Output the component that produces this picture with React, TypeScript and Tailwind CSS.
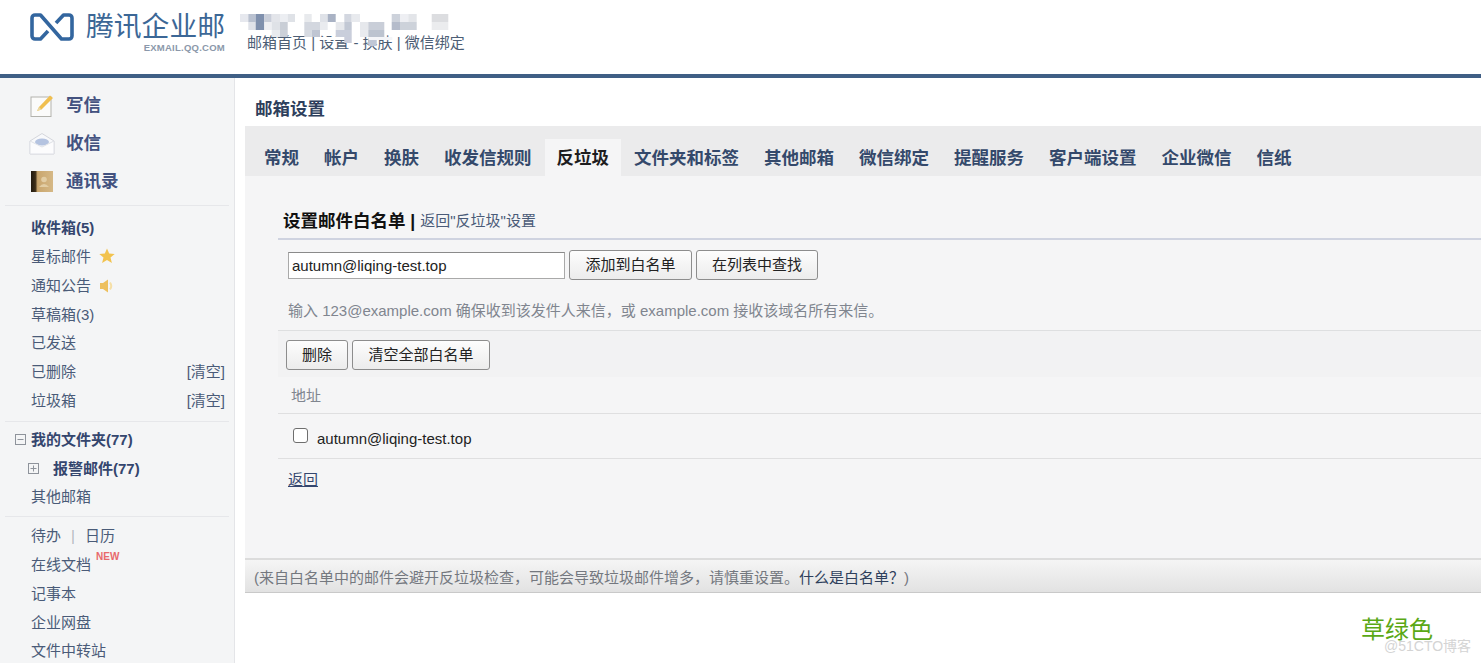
import React from 'react'

const FONT = '"Liberation Sans", "Noto Sans CJK SC", sans-serif'

const tabs = ['常规', '帐户', '换肤', '收发信规则', '反垃圾', '文件夹和标签', '其他邮箱', '微信绑定', '提醒服务', '客户端设置', '企业微信', '信纸']

// pixelated redaction over the account name, values read off the screenshot
const mosaic: [number, number, number, number, string][] = [
  [240, 14, 8.300, 8, '#e6e8ee'], [248.300, 14, 7.400, 8, '#b9c1d0'], [255.700, 14, 8.600, 8, '#7f90ad'], [264.300, 14, 7.400, 8, '#c9ced9'],
  [271.700, 14, 8.300, 8, '#e3e5ea'], [280, 14, 7.700, 8, '#eceef2'], [287.700, 14, 7.300, 8, '#dfe2e7'], [304.300, 14, 7.400, 8, '#e8eaed'],
  [320, 14, 7.700, 8, '#dfe2e8'], [327.700, 14, 8, 8, '#a9b2c4'], [344.300, 14, 7.400, 8, '#d3d7e0'], [351.700, 14, 8.300, 8, '#e8eaee'],
  [391.700, 14, 8.300, 8, '#cdd2db'], [400, 14, 8.300, 8, '#eeeff3'], [408.300, 14, 8.400, 8, '#e3e5e9'], [431.700, 14, 16.600, 8, '#dcdde0'],
  [248.300, 22, 7.400, 8, '#dfe2e9'], [255.700, 22, 8.600, 8, '#7f90ad'], [264.300, 22, 7.400, 8, '#eeeff3'], [271.700, 22, 8.300, 8, '#dfe2e7'],
  [280, 22, 7.700, 8, '#c9ced6'], [304.300, 22, 15.700, 8, '#d3d7df'], [320, 22, 7.700, 8, '#e9ebef'], [335.700, 22, 8.600, 8, '#e6e8ec'],
  [344.300, 22, 7.400, 8, '#c2c8d4'], [360, 22, 8.300, 8, '#e6e8ec'], [368.300, 22, 16, 8, '#c9ced8'], [391.700, 22, 8.300, 8, '#b5bccb'],
  [400, 22, 16.700, 8, '#cdd2da'], [431.700, 22, 16.600, 8, '#ebecee'],
  [271.700, 30, 8.300, 7, '#e9ebef'], [280, 30, 7.700, 7, '#ccd1d9'], [304.300, 30, 7.400, 7, '#d6dae1'], [311.700, 30, 8.300, 7, '#bfc5d2'],
  [335.700, 30, 16, 7, '#c9cedb'], [360, 30, 8.300, 7, '#e9ebef'], [368.300, 30, 16, 7, '#bcc3cf'],
  [320, 37, 32, 3, '#ffffff'], [368.300, 37, 24, 3, '#f4f5f8'], [344.300, 37, 7.400, 6, '#c9cddb'], [368.300, 40, 8.400, 6, '#c0c7d6'],
]

const Logo = () => (
  <svg width="44" height="30" viewBox="0 0 44 30" fill="none" stroke="#33669f" strokeWidth="3.6" strokeLinejoin="round">
    <path d="M18 19 L10.500 27 H5 A3 3 0 0 1 2 24 V6 A3 3 0 0 1 5 3 H10.500 L31.500 27 H39 A3 3 0 0 0 42 24 V6 A3 3 0 0 0 39 3 H33.500 L26 11" />
  </svg>
)

const WriteIcon = () => (
  <svg width="24" height="24" viewBox="0 0 24 24">
    <rect x="1" y="3" width="20" height="19.500" fill="#fbfbfa" stroke="#b3b3ad" />
    <path d="M7 17 L9 13 L20 1.500 L23 4 L11.500 15.500 Z" fill="#f0bf4f" />
    <path d="M7 17 L9 13 L11.500 15.500 Z" fill="#e9d9a6" />
  </svg>
)

const ReceiveIcon = () => (
  <svg width="26" height="24" viewBox="0 0 26 24">
    <path d="M1 9 L13 1.500 L25 9 V22 H1 Z" fill="#f8f9fb" stroke="#d4d6dc" />
    <ellipse cx="13" cy="10" rx="7" ry="3.500" fill="#b4c3e0" />
    <path d="M1 9 L13 15 L25 9 V22 H1 Z" fill="#fcfcfd" stroke="#dfe1e6" />
  </svg>
)

const ContactIcon = () => (
  <svg width="22" height="21" viewBox="0 0 22 21">
    <defs>
      <linearGradient id="book" x1="0" x2="1" y1="0" y2="0">
        <stop offset="0" stopColor="#211a10" />
        <stop offset="0.2" stopColor="#3d2e18" />
        <stop offset="0.3" stopColor="#c9a66e" />
        <stop offset="1" stopColor="#d5b886" />
      </linearGradient>
    </defs>
    <rect width="22" height="21" fill="url(#book)" />
    <circle cx="13" cy="8.500" r="2.800" fill="#e2cda4" />
    <path d="M8 16 Q13 10 18 16 Z" fill="#e2cda4" />
  </svg>
)

const Star = () => (
  <svg width="16" height="16" viewBox="0 0 16 16">
    <path d="M8 .5 L10.200 5.600 L15.700 6 L11.500 9.600 L12.900 15 L8 12 L3.100 15 L4.500 9.600 L.3 6 L5.800 5.600 Z" fill="#f2c34e" />
  </svg>
)

const Speaker = () => (
  <svg width="15" height="14" viewBox="0 0 15 14">
    <path d="M1 4 H4 L9 .5 V13.500 L4 10 H1 Z" fill="#edc05e" />
    <path d="M11 3.500 Q13.500 7 11 10.500" fill="none" stroke="#f5dfa6" strokeWidth="2" />
  </svg>
)

const TreeBox = ({ plus }: { plus?: boolean }) => (
  <svg width="11" height="11" viewBox="0 0 11 11" fill="none" stroke="#8e939b">
    <rect x=".5" y=".5" width="10" height="10" />
    <path d="M2.500 5.500 H8.500" />
    {plus && <path d="M5.500 2.500 V8.500" />}
  </svg>
)

const NavRow = ({ label, bold, right, children }: { label: string; bold?: boolean; right?: string; children?: React.ReactNode }) => (
  <div className="h-[28.8px] flex items-center pl-[31px] pr-[9px] text-[15px] text-[#4a5b78]">
    <span className={bold ? 'font-bold text-[#34466e]' : ''}>{label}</span>
    {children}
    {right && <span className="ml-auto">{right}</span>}
  </div>
)

const Btn = ({ label, className }: { label: string; className: string }) => (
  <button className={`h-[30px] border border-[#8d8d8d] rounded-[3px] bg-gradient-to-b from-[#fdfdfd] to-[#ececec] text-[15px] text-[#222] ${className}`}>
    {label}
  </button>
)

const Divider = () => <div className="mx-[5px] h-px bg-[#e6e7ea]" />

export default function App() {
  return (
    <div className="relative w-full h-[663px] overflow-hidden bg-white" style={{ fontFamily: FONT }}>
      {/* top bar */}
      <header className="relative h-[74px] flex">
        <div className="pl-[30px] pt-[12px]"><Logo /></div>
        <div className="ml-[11px] pt-[8px] w-[140px] flex flex-col items-end">
          <div className="text-[27.800px] leading-[38px] text-[#3c6796] whitespace-nowrap">腾讯企业邮</div>
          <div className="text-[9.500px] leading-[10px] mt-[-3px] font-bold tracking-[0.25px] text-[#8b98aa] whitespace-nowrap">EXMAIL.QQ.COM</div>
        </div>
        <div className="ml-[22px] pt-[33px] text-[15px] leading-[20px] text-[#4d5e75] whitespace-nowrap">
          邮箱首页 | 设置 - 换肤 | 微信绑定
        </div>
        <svg className="absolute left-0 top-0 blur-[0.6px]" width="480" height="50">
          {mosaic.map(([x, y, w, h, c], i) => <rect key={i} x={x} y={y} width={w} height={h} fill={c} />)}
        </svg>
      </header>
      <div className="h-[4px] bg-[#3f5f85]" />

      <div className="flex h-[585px]">
        {/* left nav */}
        <aside className="w-[234px] shrink-0 bg-[#f4f5f6]">
          <div className="pt-[8.500px] pb-[4.500px]">
            <div className="h-[38px] flex items-center pl-[30px] text-[17.500px] font-bold text-[#43527f]">
              <span className="w-[36px]"><WriteIcon /></span>写信
            </div>
            <div className="h-[38px] flex items-center pl-[29px] text-[17.500px] font-bold text-[#43527f]">
              <span className="w-[37px]"><ReceiveIcon /></span>收信
            </div>
            <div className="h-[38px] flex items-center pl-[31px] text-[17.500px] font-bold text-[#43527f]">
              <span className="w-[35px]"><ContactIcon /></span>通讯录
            </div>
          </div>
          <Divider />
          <div className="pt-[8px] pb-[5px]">
            <NavRow label="收件箱(5)" bold />
            <NavRow label="星标邮件"><span className="ml-[8px] mb-[3px]"><Star /></span></NavRow>
            <NavRow label="通知公告"><span className="ml-[8px]"><Speaker /></span></NavRow>
            <NavRow label="草稿箱(3)" />
            <NavRow label="已发送" />
            <NavRow label="已删除" right="[清空]" />
            <NavRow label="垃圾箱" right="[清空]" />
          </div>
          <Divider />
          <div className="pt-[4px] pb-[3.600px]">
            <div className="h-[28.8px] flex items-center pl-[15px] text-[15px] font-bold text-[#34466e]">
              <span className="w-[16px]"><TreeBox /></span>我的文件夹(77)
            </div>
            <div className="h-[28.8px] flex items-center pl-[28px] text-[15px] font-bold text-[#34466e]">
              <span className="w-[25px]"><TreeBox plus /></span>报警邮件(77)
            </div>
            <NavRow label="其他邮箱" />
          </div>
          <Divider />
          <div className="pt-[5.500px]">
            <NavRow label="待办">
              <span className="mx-[10px] text-[#b5b9c0]">|</span><span>日历</span>
            </NavRow>
            <NavRow label="在线文档">
              <span className="mb-[16px] ml-[5px] text-[10px] leading-none font-bold text-[#e8696b]">NEW</span>
            </NavRow>
            <NavRow label="记事本" />
            <NavRow label="企业网盘" />
            <NavRow label="文件中转站" />
          </div>
        </aside>
        <div className="w-[11px] shrink-0 border-l border-[#e4e5e8]" />

        {/* main */}
        <main className="flex-1 min-w-0">
          <h1 className="h-[48px] pl-[10px] pt-[20px] text-[17.500px] leading-[22px] font-bold text-[#2e3f5c]">邮箱设置</h1>
          <div className="h-[50px] pl-[7px] bg-[#ebebec] flex items-end gap-px">
            {tabs.map(t => (
              <div
                key={t}
                className={`h-[37px] px-3 pt-[6px] leading-[26px] text-[17.500px] font-bold whitespace-nowrap ${t === '反垃圾' ? 'bg-[#f5f5f6] text-[#1d1d1f]' : 'text-[#34496b]'}`}
              >
                {t}
              </div>
            ))}
          </div>

          <div className="h-[382px] bg-[#f5f5f6] pl-[33px]">
            <div className="h-[64px] border-b-2 border-[#cfd3e0] pl-[5px] pt-[29px] flex items-center">
              <span className="text-[17.500px] font-bold text-[#111]">设置邮件白名单 | </span>
              <span className="ml-[5px] text-[15px] text-[#4a5b78]">返回"反垃圾"设置</span>
            </div>
            <div className="pl-[10px] pt-[10px] flex items-center gap-[4px]">
              <input
                readOnly
                value="autumn@liqing-test.top"
                className="w-[277px] h-[27px] px-[3px] bg-white border border-[#a9a9a9] border-t-[#8a8a8a] text-[15px] text-[#222] outline-none"
              />
              <Btn label="添加到白名单" className="w-[123px]" />
              <Btn label="在列表中查找" className="w-[122px]" />
            </div>
            <div className="pl-[10px] mt-[21px] h-[20px] text-[15px] leading-[20px] text-[#80858f]">
              输入 123@example.com 确保收到该发件人来信，或 example.com 接收该域名所有来信。
            </div>
            <div className="mt-[9px] h-[47px] border-t border-[#dedfe0] bg-[#f2f2f3] pl-[8px] pt-[9px] flex gap-[4px]">
              <Btn label="删除" className="w-[62px]" />
              <Btn label="清空全部白名单" className="w-[138px]" />
            </div>
            <div className="h-[37px] border-b border-[#dfdfe0] pl-[13px] pt-[3px] flex items-center text-[15px] text-[#80858f]">地址</div>
            <div className="h-[45px] border-b border-[#dfdfe0] pl-[15px] pt-[6px] flex items-center text-[15px] text-[#222]">
              <span className="w-[15px] h-[15px] mb-[7px] rounded-[3px] border border-[#6e6e6e] bg-white" />
              <span className="ml-[9px]">autumn@liqing-test.top</span>
            </div>
            <div className="pl-[10px] mt-[11px] text-[15px] leading-[20px] text-[#34466e] underline">返回</div>
          </div>

          <div className="h-[35px] border-t-2 border-b border-t-[#dcdcdc] border-b-[#c9c9c9] bg-gradient-to-b from-[#f5f5f5] to-[#e2e2e2] pl-[9px] pt-[5px] flex items-center text-[15px] text-[#74787f] whitespace-nowrap">
            (来自白名单中的邮件会避开反垃圾检查，可能会导致垃圾邮件增多，请慎重设置。<span className="text-[#2e3f5c]">什么是白名单？</span>)
          </div>
        </main>
      </div>

      {/* bottom corner captions sitting over the page */}
      <div className="absolute left-[1361px] top-[619px] text-[24px] leading-[21px] text-[#5aa815] whitespace-nowrap">草绿色</div>
      <div className="absolute left-[1384px] top-[640px] text-[14px] leading-[12px] text-[#d4d4d4] whitespace-nowrap">@51CTO博客</div>
    </div>
  )
}
